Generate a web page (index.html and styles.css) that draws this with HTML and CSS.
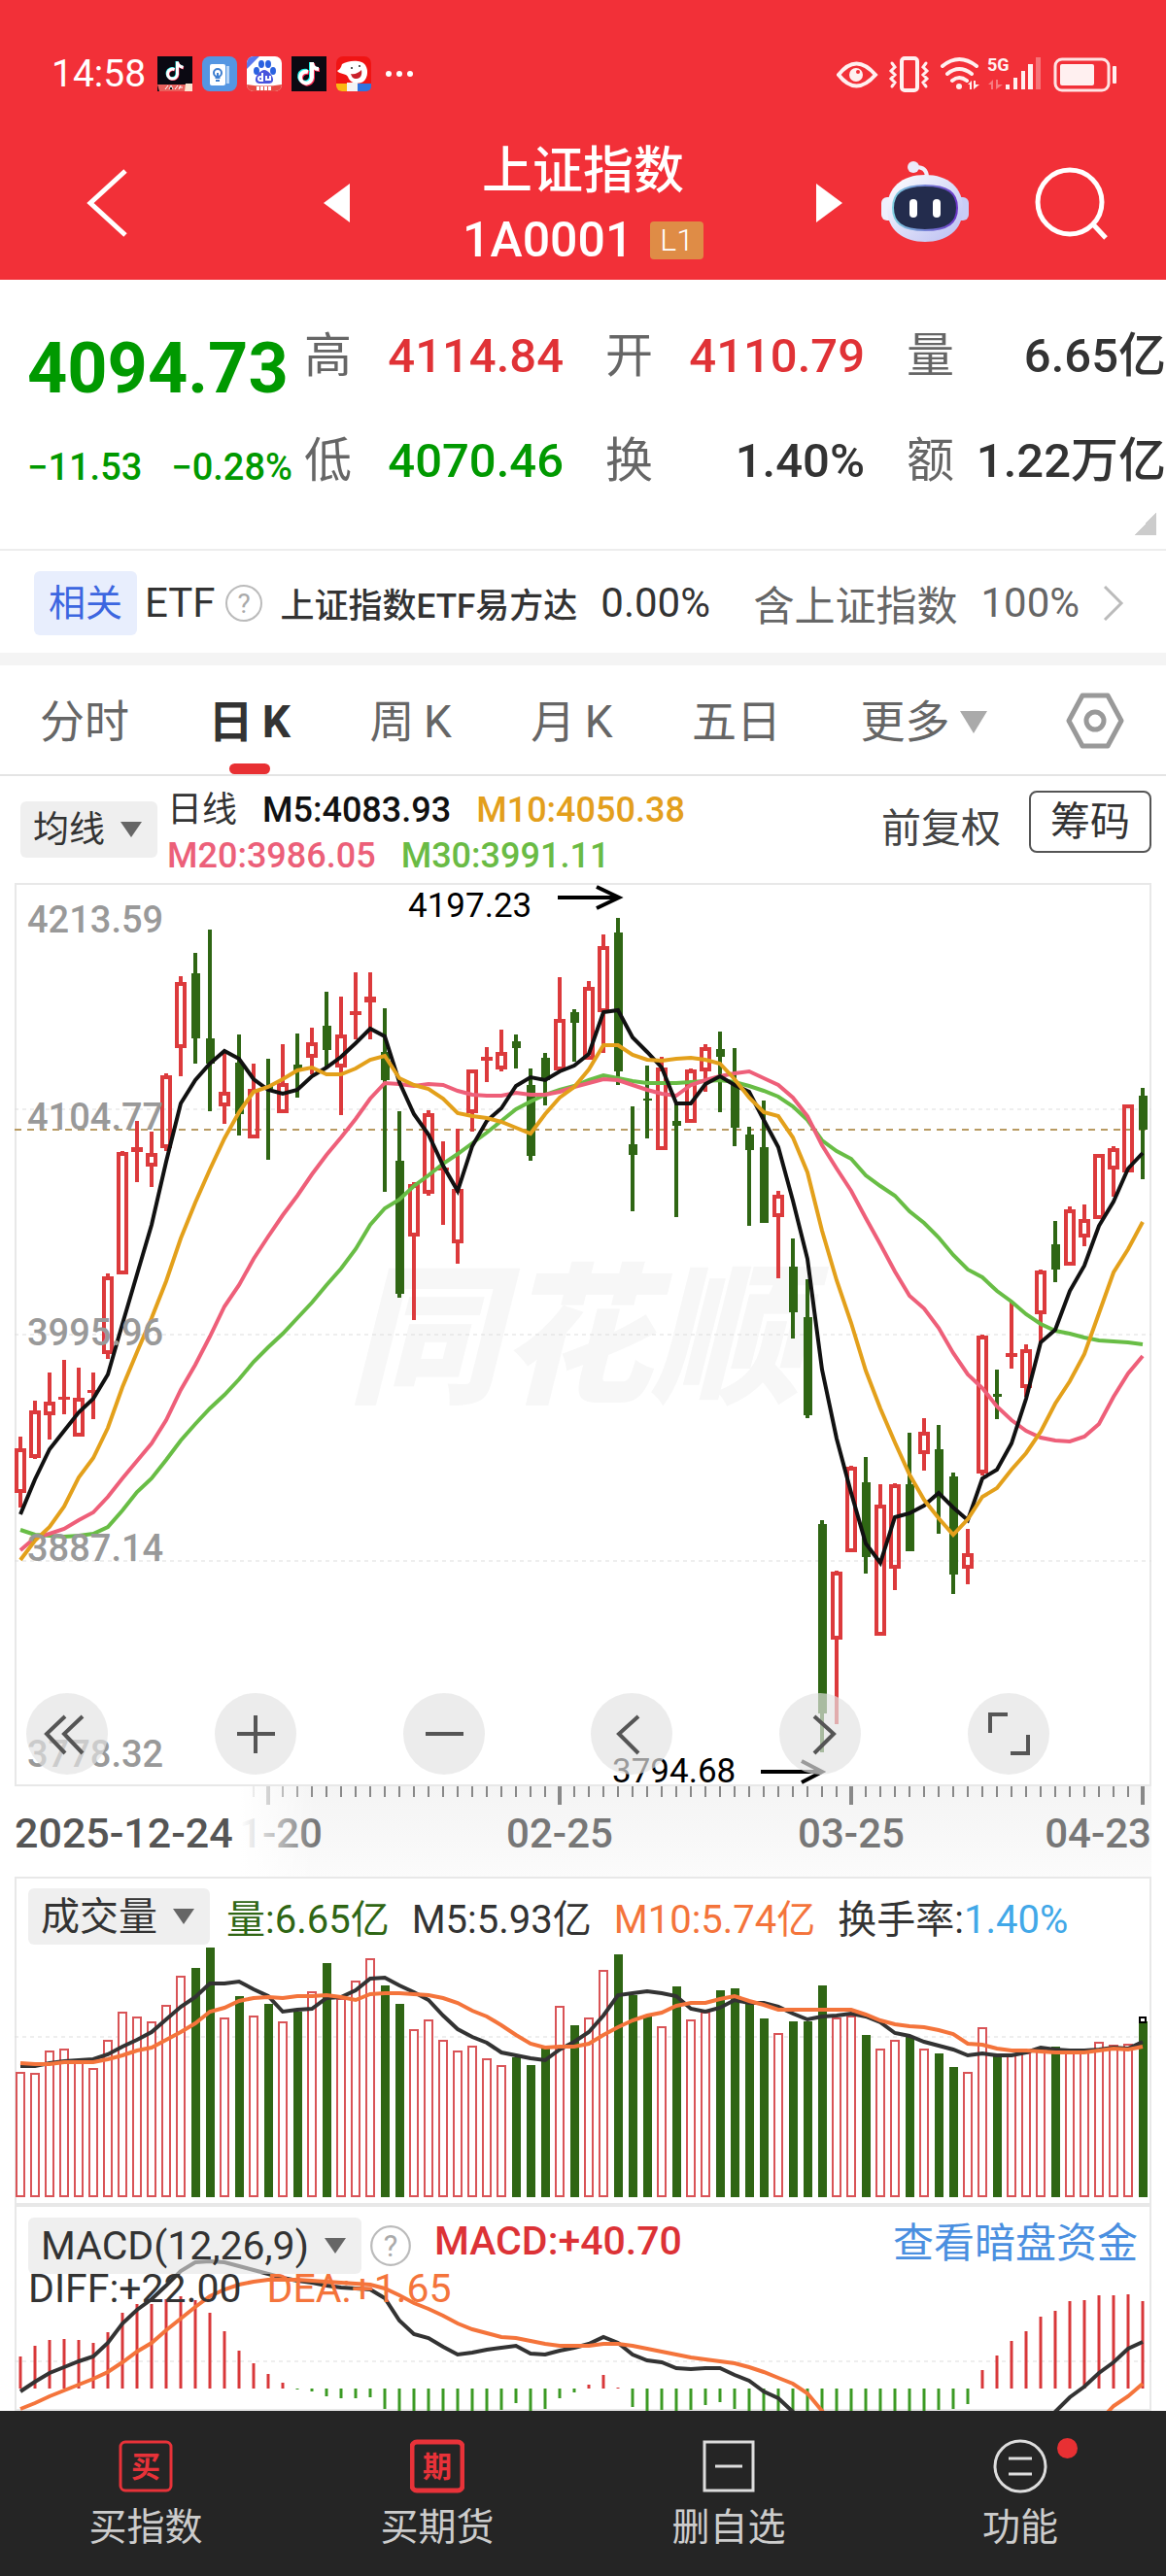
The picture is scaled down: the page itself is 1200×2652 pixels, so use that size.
FILE: index.html
```html
<!DOCTYPE html>
<html lang="zh-CN">
    <head>
        <meta charset="utf-8">
        <meta name="viewport" content="width=device-width, initial-scale=1">
        <title>上证指数 1A0001</title>
        <link rel="stylesheet" href="styles.css">
        <script src="chart.js" defer></script>
    </head>
    <body>
        <header class="header">
            <div class="status">
                <span class="time">14:58</span>
                <div class="apps">
                    <svg class="app" viewBox="0 0 36 36">
                        <rect width="36" height="36" fill="#0b0912"/>
                        <g fill="none" stroke-width="3"><path d="M17 13a5 5 0 1 0 3 5V5c0 3 2 5 6 6" stroke="#25f4ee"/><path d="M18 14a5 5 0 1 0 3 5V6c0 3 2 5 6 6" stroke="#fe2c55"/><path d="M17.500 13.500a5 5 0 1 0 3 5V5.500c0 3 2 5 6 6" stroke="#fff"/></g>
                        <path d="M0 29h36v7H2z" fill="#e9605c"/><path d="M29 28h7v8h-8z" fill="#fbe3d0"/>
                        <path d="M8 34l3-4M12 34l2-4 2 4M18 34l3-4M22 32h4M24 30l-2 4" stroke="#fff" stroke-width="1"/>
                    </svg>
                    <svg class="app" viewBox="0 0 36 36">
                        <rect width="36" height="36" rx="8" fill="#5596e2"/>
                        <path d="M25 10h3v18h-3z" fill="#b9d6f7"/>
                        <rect x="8" y="8" width="16" height="22" rx="2" fill="#fff"/>
                        <circle cx="16" cy="17" r="4" fill="none" stroke="#3f7fd0" stroke-width="2"/><path d="M13.500 22h5M14 25h4M16 17v5" stroke="#3f7fd0" stroke-width="2"/>
                    </svg>
                    <svg class="app" viewBox="0 0 36 36">
                        <rect width="36" height="36" rx="7" fill="#fff"/>
                        <path d="M7 0h6L0 13V7a7 7 0 0 1 7-7z" fill="#5a78ee"/>
                        <g fill="#2a62e0"><ellipse cx="10" cy="15" rx="3" ry="4"/><ellipse cx="15" cy="8" rx="3" ry="4"/><ellipse cx="22" cy="8" rx="3" ry="4"/><ellipse cx="27" cy="15" rx="3" ry="4"/></g>
                        <path d="M18 14c4 0 10 7 9 11s-6 3-9 3-8 1-9-3 5-11 9-11z" fill="#4a55dd"/>
                        <path d="M16 17v8h-2a2 2 0 1 1 2-2M20 20v4h4v-4" fill="none" stroke="#fff" stroke-width="2"/>
                        <path d="M0 29q18 3 36 0a7 7 0 0 1-7 7H7a7 7 0 0 1-7-7z" fill="#e84a44"/><path d="M10 33h16" stroke="#fff" stroke-width="4" stroke-dasharray="3 1"/>
                    </svg>
                    <svg class="app" viewBox="0 0 36 36">
                        <rect width="36" height="36" fill="#0b0912"/>
                        <g fill="none" stroke-width="4"><path d="M16 15a6 6 0 1 0 4 6V6c0 4 3 7 7 7" stroke="#25f4ee"/><path d="M18 17a6 6 0 1 0 4 6V7c0 4 3 7 7 7" stroke="#fe2c55"/><path d="M17 16a6 6 0 1 0 4 6V6c0 4 3 7 7 7" stroke="#fff"/></g>
                    </svg>
                    <svg class="app" viewBox="0 0 36 36">
                        <rect width="36" height="36" rx="7" fill="#f01414"/>
                        <path d="M6 8c6-4 20-5 24 1 4 6 2 16-4 18s-12 0-14-6c-2-4-8-2-11-6 2-1 4-3 5-7z" fill="#fff"/>
                        <circle cx="16" cy="12" r="1" fill="#222"/><circle cx="24" cy="10" r="1" fill="#222"/>
                        <path d="M15 18c4 1 8-1 11-4 1 5-1 9-5 9s-5-2-6-5z" fill="#c9202a"/>
                        <path d="M0 28h11v8H6a6 6 0 0 1-6-6z" fill="#fbb713"/><path d="M11 27h11v9H11z" fill="#f4f4f4"/><path d="M22 28h14v3a5 5 0 0 1-5 5h-9z" fill="#2f74df"/>
                    </svg>
                </div>
                <svg class="more-dots" viewBox="0 0 30 8"><g fill="#fff"><circle cx="4" cy="4" r="3"/><circle cx="15" cy="4" r="3"/><circle cx="26" cy="4" r="3"/></g></svg>
                <svg class="signals" viewBox="861 56 290 40">
                    <g fill="none" stroke="#fff0f0" stroke-width="3" stroke-linecap="round">
                        <path d="M863 77q18-23 38 0q-20 23-38 0z" stroke-width="4"/>
                        <rect x="928" y="60" width="16" height="33" rx="3" stroke-width="4"/>
                        <path d="M918 65l3 4-4 4 4 4-4 4 4 4-3 4M953 65l-3 4 4 4-4 4 4 4-4 4 3 4"/>
                        <path d="M970 68q17-14 35 0M975 76q12-10 25 0M980 83q7-6 15 0" stroke-width="4"/>
                    </g>
                    <g fill="#fff0f0">
                        <circle cx="881" cy="77" r="7"/><circle cx="987" cy="89" r="3"/>
                        <path d="M996 87l4-4v9h-2v-5zM1002 83v9l6-5h-4v-4z"/>
                        <path d="M1035 87h4v5h-4zM1043 80h4v12h-4zM1051 73h4v19h-4zM1058 66h5v26h-5z"/>
                        <path d="M1066 59h5v33h-5z" opacity=".35"/><path d="M1017 87l5-5v10h-2v-5zM1025 82v10l7-5h-5v-5z" opacity=".4"/>
                        <rect x="1091" y="66" width="35" height="22" rx="2"/><rect x="1145" y="68" width="4" height="18" rx="1"/>
                    </g>
                    <circle cx="883" cy="74" r="2" fill="#f23038"/>
                    <text class="net" x="1016" y="73">5G</text>
                    <rect x="1086" y="61" width="55" height="32" rx="7" fill="none" stroke="#ffe4e4" stroke-width="3"/>
                </svg>
            </div>
            <div class="title-row">
                <div class="side side-left">
                    <button class="icon-btn" aria-label="返回"><svg width="44" height="72" viewBox="0 0 44 72"><path d="M41 3L5 36l36 33" fill="none" stroke="#fff" stroke-width="5"/></svg></button>
                    <button class="icon-btn" aria-label="上一个"><svg width="27" height="40" viewBox="0 0 27 40"><path d="M27 0v40L0 20z" fill="#fff"/></svg></button>
                </div>
                <h1 class="title">上证指数<span class="code">1A0001 <span class="level">L1</span></span></h1>
                <div class="side side-right">
                    <button class="icon-btn" aria-label="下一个"><svg width="27" height="40" viewBox="0 0 27 40"><path d="M0 0v40l27-20z" fill="#fff"/></svg></button>
                    <button class="icon-btn robot" aria-label="助手">
                        <svg width="92" height="88" viewBox="0 0 92 88">
                            <defs>
                                <linearGradient id="shell" x2="1" y2="1"><stop offset="0" stop-color="#fff"/><stop offset="1" stop-color="#b9bdf2"/></linearGradient>
                                <linearGradient id="rim" x2="1"><stop offset="0" stop-color="#7fd0e0"/><stop offset="1" stop-color="#6b35c8"/></linearGradient>
                            </defs>
                            <path d="M35 7q12-1 13 9" fill="none" stroke="#f2eefb" stroke-width="4"/><circle cx="34" cy="7" r="6" fill="#eceafa"/>
                            <rect x="1" y="38" width="14" height="24" rx="6" fill="#eef0fd"/><rect x="77" y="38" width="14" height="24" rx="6" fill="#c9cdf6"/>
                            <path d="M46 15c24 0 39 13 39 35S68 84 46 84 7 72 7 50s15-35 39-35z" fill="url(#shell)"/>
                            <path d="M46 26c24 0 33 8 33 23S70 72 46 72 13 64 13 49s9-23 33-23z" fill="#232c4d" stroke="url(#rim)" stroke-width="2"/>
                            <rect x="30" y="40" width="8" height="19" rx="4" fill="#fff"/><rect x="54" y="40" width="8" height="19" rx="4" fill="#fff"/>
                        </svg>
                    </button>
                    <button class="icon-btn search" aria-label="搜索"><svg width="78" height="78" viewBox="0 0 78 78"><g fill="none" stroke="#fff" stroke-width="5"><circle cx="37" cy="38" r="33"/><path d="M61 61l13 14"/></g></svg></button>
                </div>
            </div>
        </header>

        <main>
            <section class="quote">
                <div class="price down">
                    <strong class="last">4094.73</strong>
                    <div class="change"><span>−11.53</span><span>−0.28%</span></div>
                </div>
                <dl class="stats">
                    <div><dt>高</dt><dd class="up">4114.84</dd></div>
                    <div><dt>开</dt><dd class="up">4110.79</dd></div>
                    <div><dt>量</dt><dd>6.65亿</dd></div>
                    <div><dt>低</dt><dd class="down">4070.46</dd></div>
                    <div><dt>换</dt><dd>1.40%</dd></div>
                    <div><dt>额</dt><dd>1.22万亿</dd></div>
                </dl>
                <button class="expand" aria-label="展开"></button>
            </section>

            <a href="#" class="related">
                <span class="tag">相关</span>
                <span class="etf">ETF</span>
                <svg class="help" viewBox="0 0 40 40"><circle cx="20" cy="20" r="18"/><text x="20" y="30">?</text></svg>
                <span class="fund">上证指数ETF易方达</span>
                <span>0.00%</span>
                <span class="weight">含上证指数</span>
                <span class="muted">100%</span>
                <svg class="chevron" viewBox="0 0 22 36"><path d="M2 1l17 17L2 35"/></svg>
            </a>

            <nav class="tabs">
                <button>分时</button>
                <button class="active">日&thinsp;K</button>
                <button>周&thinsp;K</button>
                <button>月&thinsp;K</button>
                <button>五日</button>
                <button class="more">更多<i></i></button>
                <button class="settings" aria-label="设置"><svg width="60" height="58" viewBox="0 0 60 58"><g fill="none" stroke="#999" stroke-width="5" stroke-linejoin="round"><path d="M17 3h26l14 26-14 26H17L3 29z"/><circle cx="30" cy="29" r="9"/></g></svg></button>
            </nav>

            <section class="ma-bar">
                <label class="pill"><select aria-label="主图指标"><option>均线</option></select></label>
                <p class="ma-values">
                    <span>日线</span><span class="m5">M5:4083.93</span><span class="m10">M10:4050.38</span><br>
                    <span class="m20">M20:3986.05</span><span class="m30">M30:3991.11</span>
                </p>
                <button class="plain">前复权</button>
                <button class="chips">筹码</button>
            </section>

            <section class="panel">
                <svg class="plot" id="kline" viewBox="15 909 1170 930">
                    <text class="watermark" x="358" y="1432">同花顺</text>
                </svg>
                <div class="tools">
                    <button aria-label="更早"><svg viewBox="0 0 84 84"><path d="M40 24L21 42l19 20M58 24L39 42l19 20"/></svg></button>
                    <button aria-label="放大"><svg viewBox="0 0 84 84"><path d="M42 23v39M23 42h39"/></svg></button>
                    <button aria-label="缩小"><svg viewBox="0 0 84 84"><path d="M23 42h39"/></svg></button>
                    <button aria-label="左移"><svg viewBox="0 0 84 84"><path d="M49 24L29 42l20 20"/></svg></button>
                    <button aria-label="右移"><svg viewBox="0 0 84 84"><path d="M36 24l20 18-20 20"/></svg></button>
                    <button aria-label="全屏"><svg viewBox="0 0 84 84"><path d="M23 41V22h18M44 62h18V43"/></svg></button>
                </div>
            </section>

            <svg class="axis" id="axis" viewBox="15 0 1170 93">
                <defs>
                    <linearGradient id="fade"><stop offset=".75" stop-color="#fff"/><stop offset="1" stop-color="#fff" stop-opacity="0"/></linearGradient>
                    <linearGradient id="shade" x2="0" y2="1"><stop offset="0" stop-color="#f4f4f4"/><stop offset="1" stop-color="#fbfbfb"/></linearGradient>
                </defs>
                <rect x="15" width="1170" height="93" fill="url(#shade)"/>
            </svg>

            <section class="panel">
                <div class="legend">
                    <label class="pill"><select aria-label="副图一"><option>成交量</option></select></label>
                    <span class="vol">量:6.65亿</span>
                    <span>M5:5.93亿</span>
                    <span class="orange">M10:5.74亿</span>
                    <span>换手率:<span class="blue">1.40%</span></span>
                </div>
                <svg class="plot" id="volume" viewBox="15 0 1170 268"></svg>
            </section>

            <section class="panel">
                <svg class="plot" id="macd" viewBox="15 0 1170 212"></svg>
                <div class="macd-legend">
                    <div class="legend">
                        <label class="pill"><select aria-label="副图二"><option>MACD(12,26,9)</option></select></label>
                        <svg class="help" viewBox="0 0 40 40"><circle cx="20" cy="20" r="18"/><text x="20" y="30">?</text></svg>
                        <span class="macd-value">MACD:+40.70</span>
                        <a href="#" class="dark-pool">查看暗盘资金</a>
                    </div>
                    <p class="macd-lines"><span>DIFF:+22.00</span><span class="orange">DEA:+1.65</span></p>
                </div>
            </section>
        </main>

        <nav class="bottom">
            <a href="#"><svg viewBox="0 0 56 56"><rect x="2" y="3" width="52" height="50" rx="5" class="red"/><text x="28" y="39">买</text></svg>买指数</a>
            <a href="#"><svg viewBox="0 0 56 56"><rect x="2" y="3" width="52" height="50" rx="5" class="red thick"/><text x="28" y="39">期</text></svg>买期货</a>
            <a href="#"><svg viewBox="0 0 56 56"><path d="M3 3h50v50H3zM14 28h28"/></svg>删自选</a>
            <a href="#" class="has-dot"><svg viewBox="0 0 56 56"><circle cx="28" cy="28" r="26"/><path d="M16 20h24M16 36h24"/></svg>功能</a>
        </nav>
    </body>
</html>
```
FILE: styles.css
```css
* {
  box-sizing: border-box;
}

body {
  margin: 0;
  background: #fff;
  color: #333;
  font-family: Roboto, "Noto Sans CJK SC", sans-serif;
}

button {
  padding: 0;
  border: 0;
  background: none;
  color: inherit;
  font: inherit;
}

a {
  color: inherit;
  text-decoration: none;
}

p, dl, dd, h1 {
  margin: 0;
}

svg {
  display: block;
}

.up {
  color: #e03236;
}

.down {
  color: #090;
}

/* header */
.header {
  padding: 56px 0 5px;
  background: #f23038;
  color: #fff;
}

.status {
  display: flex;
  align-items: center;
  height: 40px;
  padding: 0 49px 0 53px;
}

.time {
  font-size: 39px;
}

.apps {
  display: flex;
  gap: 10px;
  margin-left: 12px;
}

.app {
  width: 36px;
  height: 36px;
}

.more-dots {
  width: 30px;
  margin-left: 14px;
}

.signals {
  width: 290px;
  margin-left: auto;
}

.net {
  fill: #fff0f0;
  font-size: 18px;
  font-weight: 700;
}

.title-row {
  display: grid;
  grid-template-columns: 3fr 4fr 3fr;
  align-items: center;
  margin-top: 43px;
}

.title {
  padding-top: 2px;
  font-size: 52px;
  font-weight: 500;
  line-height: 71px;
  text-align: center;
}

.code {
  display: flex;
  justify-content: center;
  align-items: center;
  gap: 18px;
  font-size: 50px;
}

.level {
  padding: 0 10px;
  border-radius: 4px;
  background: #df8c46;
  font-size: 32px;
  font-weight: 300;
  line-height: 39px;
}

.side {
  display: flex;
  align-items: center;
  padding-bottom: 4px;
}

.side-left {
  justify-content: space-between;
  padding-left: 88px;
}

.robot {
  margin-left: 39px;
}

.search {
  margin-left: 66px;
}

/* quote */
.quote {
  position: relative;
  display: flex;
  padding: 25px 0 36px;
  border-bottom: 2px solid #ededed;
}

.price {
  width: 313px;
  padding: 22px 0 0 28px;
}

.last {
  display: block;
  margin-bottom: 26px;
  font-size: 72px;
  line-height: 90px;
}

.change {
  display: flex;
  gap: 30px;
  font-size: 38px;
  font-weight: 500;
  line-height: 60px;
}

.stats {
  display: grid;
  flex: 1;
  grid-template-columns: repeat(3, 1fr);
  column-gap: 43px;
  font-size: 49px;
  line-height: 108px;
}

.stats div {
  display: flex;
  justify-content: space-between;
  white-space: nowrap;
}

.stats dt {
  color: #666;
}

.stats dd {
  font-weight: 500;
}

.expand {
  position: absolute;
  right: 10px;
  bottom: 14px;
  width: 22px;
  height: 24px;
  background: linear-gradient(to bottom right, transparent 50%, #ccc 50%);
}

.related {
  display: flex;
  align-items: center;
  height: 118px;
  padding: 2px 43px 0 35px;
  border-bottom: 13px solid #f4f4f4;
  font-size: 42px;
  white-space: nowrap;
}

.tag {
  margin-right: 8px;
  padding: 0 15px;
  border-radius: 6px;
  background: #e8eefd;
  color: #3c66e0;
  font-size: 38px;
  line-height: 66px;
}

.help {
  width: 40px;
  fill: none;
  stroke: #bbb;
  stroke-width: 2;
}

.help text {
  fill: #aaa;
  stroke: none;
  font-size: 28px;
  text-anchor: middle;
}

.etf {
  margin-right: 9px;
}

.fund {
  margin: 0 24px 0 18px;
  font-size: 35px;
  font-weight: 500;
}

.weight {
  margin: 0 24px 0 auto;
  color: #666;
}

.muted {
  color: #666;
}

.chevron {
  width: 22px;
  margin-left: 24px;
  fill: none;
  stroke: #bbb;
  stroke-width: 3;
}

/* period tabs */
.tabs {
  display: flex;
  justify-content: space-between;
  align-items: flex-end;
  height: 114px;
  padding: 0 43px 0 41px;
  border-bottom: 2px solid #e4e4e4;
  color: #666;
  font-size: 46px;
}

.tabs button {
  position: relative;
  height: 112px;
  padding-top: 5px;
  line-height: 107px;
}

.tabs .active {
  color: #333;
  font-weight: 700;
}

.tabs .active::after {
  content: "";
  position: absolute;
  bottom: 0;
  left: 50%;
  width: 42px;
  height: 11px;
  margin-left: -21px;
  border-radius: 6px;
  background: #e83033;
}

.tabs .more {
  display: flex;
  align-items: center;
}

.tabs .settings {
  padding-top: 2px;
}

.more i {
  margin-left: 10px;
  border: 14px solid transparent;
  border-top: 23px solid #aaa;
  border-bottom: 0;
}

/* moving averages */
.ma-bar {
  display: flex;
  align-items: center;
  height: 110px;
  padding: 0 15px 0 21px;
}

.pill {
  position: relative;
  flex: none;
}

.pill::after {
  content: "";
  position: absolute;
  top: 50%;
  right: 16px;
  margin-top: -8px;
  border: 11px solid transparent;
  border-top: 16px solid #666;
  border-bottom: 0;
  pointer-events: none;
}

.pill select {
  display: block;
  height: 58px;
  padding: 0 54px 0 13px;
  border: 0;
  border-radius: 6px;
  background: rgba(229, 229, 229, .6);
  color: #333;
  font: inherit;
  appearance: none;
}

.ma-bar .pill {
  font-size: 37px;
}

.ma-values {
  margin-left: 10px;
  padding-top: 8px;
  font-size: 36px;
  font-weight: 500;
  line-height: 47px;
  white-space: nowrap;
}

.ma-values span {
  margin-right: 26px;
}

.ma-values span:first-child {
  font-weight: 400;
}

.m5 {
  color: #111;
}

.m10 {
  color: #e39f1c;
}

.ma-values .m20 {
  color: #ec6079;
  font-weight: 500;
}

.m30 {
  color: #6abb45;
}

.plain {
  margin: 0 0 10px auto;
  color: #444;
  font-size: 41px;
}

.chips {
  margin: 0 0 16px 29px;
  padding: 0 20px;
  border: 2px solid #555;
  border-radius: 8px;
  font-size: 41px;
  line-height: 60px;
}

/* charts */
.panel {
  position: relative;
  margin: 0 15px;
  box-shadow: inset 0 0 0 2px #e8e8e8;
}

.plot {
  width: 100%;
}

.watermark {
  fill: #f7f7f7;
  font-size: 156px;
  font-style: italic;
  font-weight: 900;
}

.grid {
  stroke: #ddd;
  stroke-dasharray: 4 4;
}

.current {
  stroke: #b89a62;
  stroke-width: 2;
  stroke-dasharray: 7 6;
}

.scale {
  fill: #999;
  font-size: 38px;
  font-weight: 500;
}

.extreme {
  fill: #000;
  font-size: 35px;
}

.arrow {
  fill: none;
  stroke: #000;
  stroke-width: 4;
}

.line {
  fill: none;
  stroke-width: 4;
}

.tools {
  position: absolute;
  bottom: 12px;
  left: 12px;
  right: 105px;
  display: flex;
  justify-content: space-between;
}

.tools button {
  width: 84px;
  height: 84px;
  border-radius: 50%;
  background: rgba(227, 227, 227, .68);
}

.tools svg {
  fill: none;
  stroke: #555;
  stroke-width: 4;
}

.axis {
  width: calc(100% - 30px);
  margin: 0 15px;
}

.date {
  fill: #777;
  font-size: 42px;
  font-weight: 500;
}

.start {
  fill: #555;
  font-size: 43px;
}

.legend {
  display: flex;
  align-items: center;
  height: 70px;
  padding: 12px 14px 0;
  font-size: 40px;
  white-space: nowrap;
}

.legend > span {
  margin-left: 23px;
}

.legend .vol {
  margin-left: 17px;
  color: #2f6614;
}

.legend .orange,
.orange {
  color: #f4743b;
}

.blue {
  color: #42a8e8;
}

.macd-legend {
  position: absolute;
  top: 1px;
  left: 0;
  right: 0;
}

.macd-legend .legend,
.macd-lines {
  font-size: 41px;
}

.legend .help {
  width: 44px;
  margin-left: 8px;
}

.legend .macd-value {
  padding-bottom: 10px;
  color: #dc3236;
  font-weight: 500;
}

.dark-pool {
  margin-left: auto;
  padding-bottom: 14px;
  color: #4a8fe0;
  font-size: 42px;
}

.macd-lines {
  padding-left: 14px;
  line-height: 30px;
}

.macd-lines span {
  margin-right: 26px;
}

/* bottom bar */
.bottom {
  display: grid;
  grid-template-columns: repeat(4, 1fr);
  padding: 29px 0 19px;
  background: #252525;
  color: #ccc;
  font-size: 39px;
  line-height: 62px;
  text-align: center;
}

.bottom svg {
  width: 56px;
  margin: 0 auto 4px;
  fill: none;
  stroke: #ddd;
  stroke-width: 3;
}

.bottom .red {
  stroke: #e83239;
}

.bottom .thick {
  stroke-width: 5;
}

.bottom text {
  fill: #e83239;
  stroke: none;
  font-size: 30px;
  font-weight: 700;
  text-anchor: middle;
}

.has-dot {
  position: relative;
}

.has-dot::after {
  content: "";
  position: absolute;
  top: -1px;
  left: 50%;
  width: 21px;
  height: 21px;
  margin-left: 38px;
  border-radius: 50%;
  background: #e83033;
}
```
FILE: chart.js
```js
const RED = '#dc3a3c';
const GREEN = '#2f6614';
const STEP = 15;

// high, body top, body bottom, low; a leading '-' marks a falling day
const candles = `1479 1491 1536 1552,1442 1452 1500 1502,1413 1443 1456 1482,1400 1438 1441 1456,1408 1439 1478 1478,1413 1431 1434 1461,
1311 1314 1393 1399,1185 1186 1311 1312,1154 1181 1186 1217,1165 1187 1200 1222,1105 1107 1181 1185,1005 1011 1078 1108,
-981 1002 1069 1095,-957 1069 1095 1144,1084 1124 1138 1157,-1065 1094 1147 1169,1095 1121 1171 1172,-1090 1118 1121 1194,
1075 1115 1145 1145,-1064 1096 1103 1130,1058 1073 1088 1106,-1021 1056 1081 1099,1026 1065 1098 1148,1001 1041 1045 1070,
1001 1026 1032 1070,-1038 1083 1112 1227,-1144 1195 1332 1336,1217 1219 1272 1359,1143 1146 1228 1231,1175 1202 1205 1261,
1162 1224 1279 1301,1101 1101 1145 1165,1078 1088 1092 1114,1060 1083 1100 1103,-1065 1072 1079 1100,-1100 1117 1190 1195,
-1084 1089 1112 1138,1006 1049 1101 1103,-1039 1042 1053 1093,1010 1016 1090 1091,962 974 1041 1084,-945 960 1103 1117,
-1139 1178 1189 1247,-1097 1131 1133 1172,1088 1099 1183 1184,-1136 1154 1159 1253,1100 1101 1155 1156,1075 1078 1102 1124,
-1062 1080 1088 1145,-1079 1116 1161 1180,-1160 1168 1184 1262,-1133 1181 1259 1259,1226 1230 1252 1316,-1275 1304 1351 1378,
-1317 1356 1457 1460,-1565 1569 1764 1804,1617 1618 1687 1775,1509 1510 1597 1597,-1500 1526 1603 1620,1528 1549 1683 1683,
1527 1528 1614 1637,-1475 1528 1597 1597,1460 1474 1496 1514,-1467 1492 1539 1579,-1516 1520 1621 1641,1574 1599 1614 1631,
1374 1375 1516 1519,-1410 1435 1438 1461,1341 1393 1397 1409,1384 1389 1428 1438,1307 1308 1352 1382,-1257 1281 1307 1320,
1242 1245 1302 1303,1240 1255 1273 1283,1188 1188 1254 1255,1180 1182 1203 1232,1137 1137 1206 1206,-1120 1128 1163 1214`
    .split(',').map(row => row.trim().split(' ').map(Number));

const ma5 = [1559,1523,1492,1473,1454,1440,1415,1363,1312,1261,1196,1136,1112,1095,1082,1090,1111,1122,1126,1122,1108,1099,1088,1074,1059,1067,1114,1147,1168,1200,1226,1180,1154,1141,1118,1109,1112,1103,1097,1085,1042,1040,1068,1083,1099,1136,1136,1116,1108,1117,1124,1153,1181,1236,1296,1410,1481,1537,1589,1609,1562,1558,1550,1537,1552,1565,1522,1513,1486,1440,1382,1369,1329,1303,1262,1237,1203,1187];
const ma10 = [1606,1586,1572,1551,1521,1501,1470,1428,1392,1357,1319,1275,1238,1204,1172,1145,1124,1119,1111,1102,1099,1106,1106,1100,1091,1087,1110,1117,1121,1131,1146,1149,1151,1155,1161,1167,1147,1130,1119,1101,1076,1076,1086,1091,1092,1090,1089,1091,1095,1111,1130,1145,1149,1171,1207,1267,1318,1362,1411,1450,1485,1518,1544,1563,1580,1564,1541,1532,1513,1496,1474,1445,1422,1394,1352,1310,1286,1258];
const ma20 = [1596,1583,1579,1574,1565,1557,1541,1522,1504,1486,1462,1431,1405,1376,1345,1323,1296,1273,1251,1231,1209,1189,1171,1152,1131,1115,1116,1118,1116,1117,1123,1127,1128,1128,1125,1127,1127,1124,1119,1115,1111,1112,1117,1122,1126,1128,1117,1112,1108,1105,1103,1110,1117,1130,1149,1179,1203,1226,1254,1281,1309,1334,1347,1367,1393,1415,1429,1448,1462,1473,1480,1483,1484,1479,1466,1438,1414,1396];
const ma30 = [1575,1580,1581,1582,1581,1579,1572,1555,1536,1522,1503,1483,1466,1450,1436,1420,1402,1387,1373,1357,1341,1323,1306,1286,1261,1244,1235,1221,1210,1198,1188,1177,1166,1154,1142,1134,1127,1122,1118,1112,1107,1110,1113,1115,1115,1115,1114,1113,1112,1114,1118,1123,1129,1139,1153,1174,1185,1193,1210,1221,1231,1247,1259,1274,1292,1307,1315,1329,1340,1353,1363,1370,1373,1377,1380,1381,1382,1384];

// heights above the base line
const volumes = [129,128,151,153,141,133,162,191,186,181,198,228,236,257,185,207,187,199,181,191,212,241,205,223,246,218,199,173,183,162,151,156,143,136,144,136,155,197,177,185,234,250,208,187,176,217,183,191,213,215,201,184,169,181,181,218,185,187,167,153,162,165,153,148,134,129,175,146,147,149,152,155,150,150,160,157,158,181];
const vol5 = [135,135,138,140,141,142,147,155,162,170,183,196,206,220,220,222,214,207,191,193,194,205,206,213,225,226,218,211,203,187,173,165,159,149,146,143,141,152,160,170,187,208,210,212,210,207,194,191,195,203,200,200,196,189,183,186,187,189,186,180,169,166,160,156,152,146,148,146,146,149,154,152,151,151,152,154,153,160];
const vol10 = [138,137,137,139,139,139,142,146,151,154,162,170,179,191,195,202,205,206,205,207,207,208,206,203,209,210,210,209,208,205,200,192,186,177,167,158,154,155,155,158,167,175,182,187,190,197,200,200,204,207,202,198,193,193,193,193,193,193,188,182,178,176,175,172,168,158,157,153,151,151,150,149,149,149,151,153,152,155];

const macd = [33,44,50,51,50,47,58,78,87,87,92,95,91,78,59,39,26,15,6,-1,-3,-8,-10,-10,-9,-21,-30,-30,-30,-30,-30,-30,-30,-22,-15,-30,-21,-10,-4,4,14,1,-19,-30,-22,-30,-22,-17,-14,-21,-30,-30,-30,-30,-30,-30,-30,-30,-30,-30,-30,-30,-26,-22,-21,-16,19,34,49,59,74,80,90,91,96,96,97,90];
const diff = [-3,7,16,22,28,33,47,67,81,92,106,121,130,131,130,126,122,118,114,111,109,106,104,103,102,93,70,56,52,43,35,37,40,42,44,36,35,39,42,46,53,47,35,29,27,21,20,21,21,14,8,-3,-10,-24,-40,-60,-60,-60,-60,-60,-60,-60,-60,-60,-60,-60,-60,-60,-60,-60,-40,-24,-9,2,16,27,41,48];
const dea = [-21,-15,-8,-2,4,10,17,27,38,47,60,72,84,95,102,107,110,112,112,112,111,110,109,108,107,103,96,88,82,75,67,61,57,53,52,49,46,44,44,44,46,46,44,41,38,35,32,30,28,26,22,17,11,5,-5,-23,-40,-60,-60,-60,-60,-60,-60,-60,-60,-60,-60,-60,-60,-60,-60,-60,-60,-50,-34,-18,-8,5];

// Adds one SVG element to a chart.
function add(svg, name, attrs, text) {
    const el = document.createElementNS('http://www.w3.org/2000/svg', name);
    for (const key in attrs) {
        el.setAttribute(key, attrs[key]);
    }
    if (text) el.textContent = text;
    svg.append(el);
}

function x(i) {
    return 21 + i * STEP;
}

function line(svg, ys, stroke) {
    const points = ys.map((y, i) => `${x(i)},${y}`).join(' ');
    add(svg, 'polyline', {class: 'line', points, stroke});
}

function grid(svg, y, name = 'grid') {
    add(svg, 'path', {class: name, d: `M15 ${y}H1185`});
}

function drawKline() {
    const svg = document.querySelector('#kline');
    [1142, 1374, 1607].forEach(y => grid(svg, y));
    grid(svg, 1163, 'current');

    candles.forEach(([high, top, bottom, low], i) => {
        const fall = high < 0;
        const color = fall ? GREEN : RED;
        const h = Math.abs(high);
        add(svg, 'path', {d: `M${x(i)} ${h}V${top}M${x(i)} ${bottom}V${low}`, stroke: color, 'stroke-width': 4});
        if (fall) {
            add(svg, 'rect', {x: x(i) - 4, y: top, width: 9, height: bottom - top, fill: color});
        } else if (bottom - top < 7) {
            add(svg, 'rect', {x: x(i) - 6, y: top, width: 12, height: bottom - top, fill: color});
        } else {
            add(svg, 'rect', {x: x(i) - 4, y: top + 2, width: 8, height: bottom - top - 3, fill: 'none', stroke: color, 'stroke-width': 4});
        }
    });

    line(svg, ma30, '#68bd45');
    line(svg, ma20, '#ee5f79');
    line(svg, ma5, '#111');
    line(svg, ma10, '#e3a01b');

    [['4213.59', 960], ['4104.77', 1163], ['3995.96', 1385], ['3887.14', 1607], ['3778.32', 1819]].forEach(([text, y]) => {
        add(svg, 'text', {class: 'scale', x: 28, y}, text);
    });
    add(svg, 'text', {class: 'extreme', x: 420, y: 944}, '4197.23');
    add(svg, 'path', {class: 'arrow', d: 'M574 924H636M614 913L637 924L614 935'});
    add(svg, 'text', {class: 'extreme', x: 630, y: 1835}, '3794.68');
    add(svg, 'path', {class: 'arrow', d: 'M783 1824H845M825 1813L846 1824L825 1835'});
}

function drawAxis() {
    const svg = document.querySelector('#axis');
    for (let i = 15; i < candles.length; i++) {
        const major = i % 20 === 17;
        add(svg, 'path', {d: `M${x(i)} 0V${major ? 19 : 11}`, stroke: '#888', 'stroke-width': major ? 4 : 2});
    }
    [['1-20', 289], ['02-25', 576], ['03-25', 876]].forEach(([text, at]) => {
        add(svg, 'text', {class: 'date', x: at, y: 63, 'text-anchor': 'middle'}, text);
    });
    add(svg, 'text', {class: 'date', x: 1185, y: 63, 'text-anchor': 'end'}, '04-23');
    add(svg, 'rect', {x: 15, width: 310, height: 93, fill: 'url(#fade)'});
    add(svg, 'text', {class: 'date start', x: 15, y: 63}, '2025-12-24');
}

function drawVolume() {
    const svg = document.querySelector('#volume');
    const base = 260;
    grid(svg, 95);
    volumes.forEach((v, i) => {
        if (candles[i][0] < 0) {
            add(svg, 'rect', {x: x(i) - 4, y: base - v, width: 9, height: v, fill: GREEN});
        } else {
            add(svg, 'rect', {x: x(i) - 4, y: base - v + 1, width: 8, height: v - 2, fill: '#fff', stroke: '#d95457', 'stroke-width': 2});
        }
    });
    add(svg, 'rect', {x: x(77) - 3, y: 75, width: 6, height: 5, fill: '#fff', stroke: '#000', 'stroke-width': 2});
    line(svg, vol5.map(v => base - v), '#333');
    line(svg, vol10.map(v => base - v), '#f4743b');
}

function drawMacd() {
    const svg = document.querySelector('#macd');
    const base = 189;
    grid(svg, 161);
    macd.forEach((v, i) => {
        add(svg, 'path', {d: `M${x(i)} ${base}V${base - v}`, stroke: v > 0 ? '#d8383a' : '#3c9a24', 'stroke-width': 3});
    });
    line(svg, diff.map(v => base - v), '#333');
    line(svg, dea.map(v => base - v), '#f4743b');
}

drawKline();
drawAxis();
drawVolume();
drawMacd();
```
